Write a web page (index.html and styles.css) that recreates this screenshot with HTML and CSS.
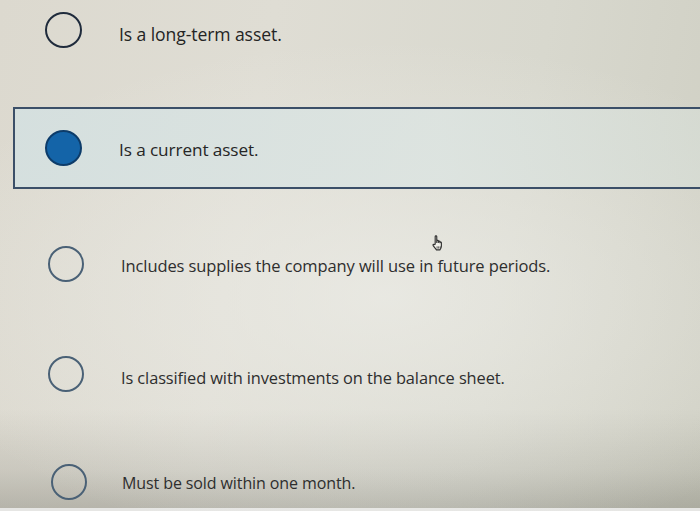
FILE: index.html
```html
<!DOCTYPE html>
<html lang="en">
<head>
<meta charset="utf-8">
<title>Multiple choice</title>
<link rel="stylesheet" href="styles.css">
</head>
<body>
<main class="screen">
  <ul class="options">
    <li class="option option--first">
      <span class="radio"></span>
      <span class="label label--first">Is a long-term asset.</span>
    </li>
    <li class="option option--selected">
      <span class="radio radio--checked"></span>
      <span class="label label--second">Is a current asset.</span>
    </li>
    <li class="option option--third">
      <span class="radio radio--soft"></span>
      <span class="label label--third">Includes supplies the company will use in future periods.</span>
    </li>
    <li class="option option--fourth">
      <span class="radio radio--soft"></span>
      <span class="label label--fourth">Is classified with investments on the balance sheet.</span>
    </li>
    <li class="option option--fifth">
      <span class="radio radio--soft"></span>
      <span class="label label--fifth">Must be sold within one month.</span>
    </li>
  </ul>
  <svg class="cursor" width="16" height="18" viewBox="0 0 14 16" aria-hidden="true">
    <path d="M4.5 9V2.2c0-.8 1.4-.8 1.4 0V7.5V6.3c0-.8 1.4-.8 1.4 0v1.2V6.8c0-.8 1.4-.8 1.4 0v.9c0-.7 1.3-.7 1.3 0v3.2c0 1.4-.7 2.5-1.3 3.2H5.6C4.8 13 3.6 11.6 2.7 10.3c-.5-.7.4-1.5 1-.9z" fill="#f1f0ea" stroke="#2f2f2f" stroke-width="1" stroke-linejoin="round"/>
    <path d="M6.2 11v2M7.6 11v2M9 11v2" stroke="#2f2f2f" stroke-width="0.7"/>
  </svg>
</main>
</body>
</html>
```

FILE: styles.css
```css
* { box-sizing: border-box; }

html, body {
  margin: 0;
  padding: 0;
}

body {
  width: 700px;
  height: 511px;
  overflow: hidden;
  font-family: "Open Sans", "Liberation Sans", sans-serif;
  color: #2a2a2a;
}

.screen {
  position: relative;
  width: 700px;
  height: 511px;
  overflow: hidden;
  background:
    linear-gradient(180deg, rgba(0,0,0,0) 0%, rgba(0,0,0,0) 80%, rgba(90,90,80,0.14) 92%, rgba(80,80,70,0.28) 99.4%, #e6e6e4 99.5%),
    linear-gradient(100deg, #dcd9cf 0%, #dfddd4 35%, #d8d8ce 70%, #cfcfc3 100%);
}

.screen::before {
  content: "";
  position: absolute;
  inset: 0;
  background: radial-gradient(ellipse 70% 50% at 55% 58%, rgba(238,238,233,0.7), rgba(238,238,233,0) 100%);
  pointer-events: none;
}

.options {
  position: relative;
  list-style: none;
  margin: -30px 0 0;
  padding: 0;
  display: grid;
  grid-template-rows: 119px 118px 113px 108px 107px;
}

.option {
  display: flex;
  align-items: center;
  align-self: center;
  height: 82px;
  padding-left: 45px;
}

.option--selected {
  margin-left: 13px;
  margin-right: -20px;
  padding-left: 30px;
  border: 2px solid #3b4f68;
  border-right: 0;
  background: linear-gradient(90deg, rgba(212,224,224,0.9), rgba(220,228,225,0.85) 60%, rgba(214,220,212,0.75));
}

.option--third { padding-left: 48px; }
.option--fourth { padding-left: 48px; }
.option--fifth { padding-left: 51px; }

.radio {
  flex: none;
  width: 37px;
  height: 36px;
  border-radius: 50%;
  border: 2px solid #1f2b3c;
}

.radio--soft {
  width: 36px;
  height: 36px;
  border: 2px solid #4a6176;
}

.radio--checked {
  background: #1464a8;
  border: 2px solid #0d3c6a;
}

.label {
  margin-left: 37px;
  color: #2e2e2e;
  letter-spacing: -0.1px;
}

.label--first {
  font-size: 17.6px;
  color: #242424;
  padding-top: 8px;
}

.label--second {
  font-size: 17.2px;
  color: #262626;
  padding-top: 3px;
}

.label--third {
  font-size: 16.5px;
  padding-top: 4px;
}

.label--fourth {
  font-size: 16.4px;
  padding-top: 6px;
}

.label--fifth {
  font-size: 16px;
  margin-left: 35px;
  padding-top: 2px;
}

.cursor {
  position: absolute;
  left: 430px;
  top: 234px;
}
```
